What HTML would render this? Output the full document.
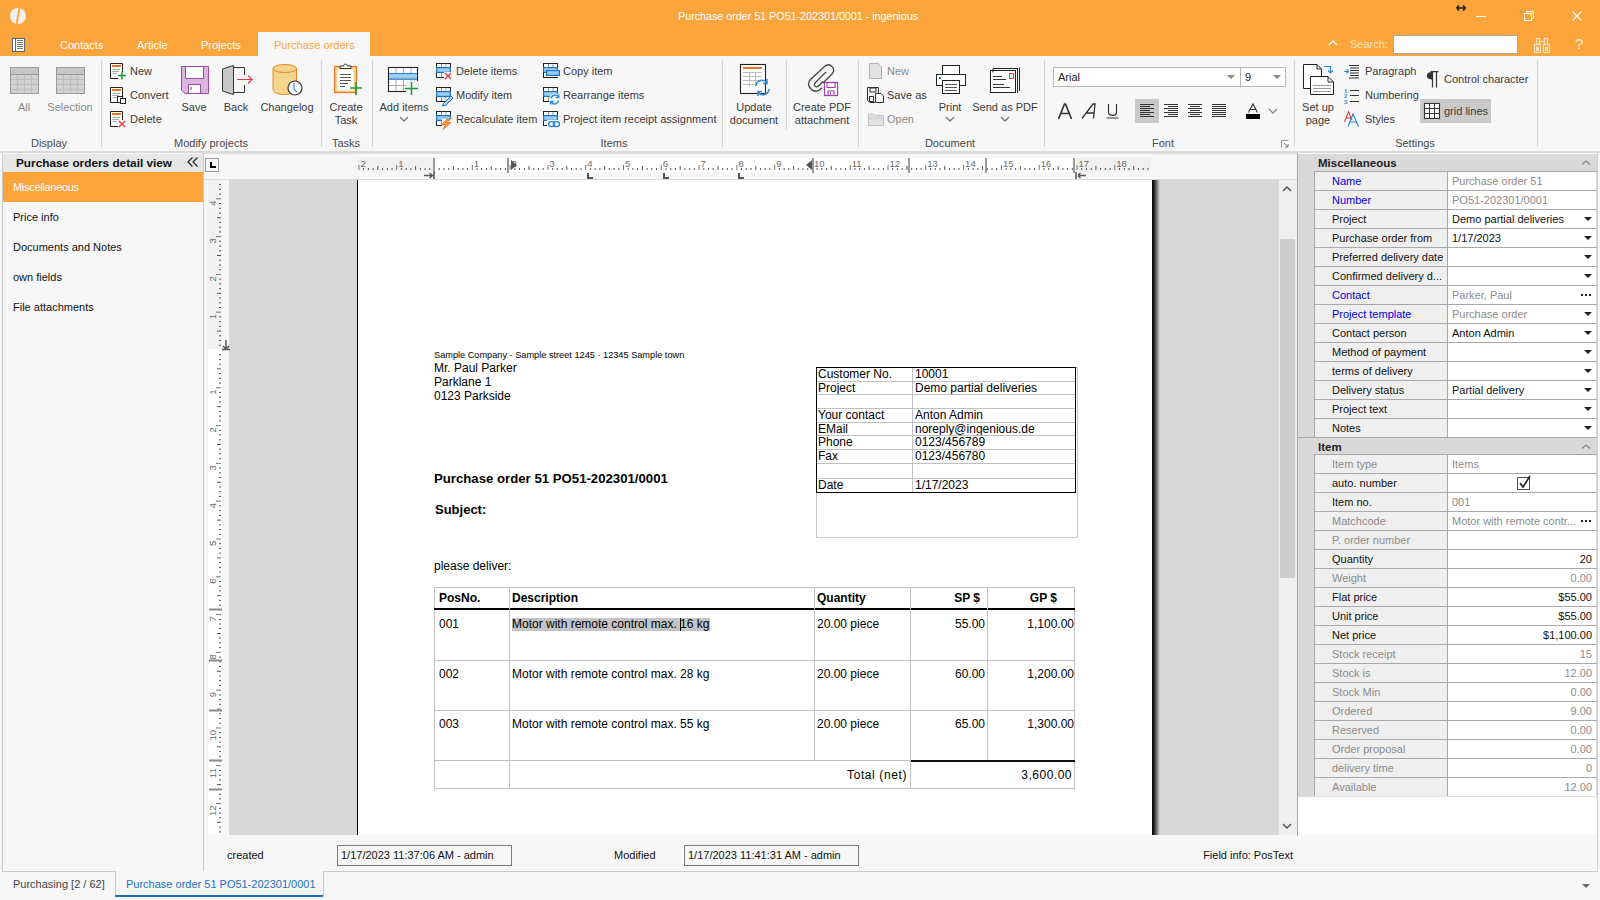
<!DOCTYPE html><html><head><meta charset="utf-8"><style>
*{margin:0;padding:0;box-sizing:border-box}
html,body{width:1600px;height:900px;overflow:hidden;background:#F7F7F7;font-family:"Liberation Sans",sans-serif;}
.t{position:absolute;white-space:nowrap;font-size:11px;line-height:14px;color:#222;}
.d{position:absolute;white-space:nowrap;font-family:"Liberation Sans",sans-serif;font-size:12px;line-height:14px;color:#000;}
svg{position:absolute;overflow:visible}
</style></head><body>
<div style="position:absolute;left:0px;top:0px;width:1600px;height:56px;background:#FAA43C"></div>
<svg style="position:absolute;left:10px;top:8px;" width="16" height="16" viewBox="0 0 16 16"><circle cx="8" cy="8" r="8" fill="#f2f2f2"/><path d="M8.5 -1 L10.5 -1 L7.5 17 L5.5 17 Z" fill="#FAA43C"/></svg>
<div class="t" style="left:598px;top:9px;width:400px;text-align:center;color:#fff;font-size:11px;letter-spacing:-0.14px">Purchase order 51 PO51-202301/0001 - ingenious</div>
<svg style="position:absolute;left:1455px;top:4px;" width="12" height="8" viewBox="0 0 12 8"><path d="M1.5 4 H10.5 M1.5 4 L4 1.5 M1.5 4 L4 6.5 M10.5 4 L8 1.5 M10.5 4 L8 6.5" stroke="#222" stroke-width="1.7" fill="none"/></svg>
<div style="position:absolute;left:1476px;top:16px;width:10px;height:1px;background:#fff"></div>
<svg style="position:absolute;left:1524px;top:11px;" width="11" height="11" viewBox="0 0 11 11"><rect x="0.5" y="2.5" width="7" height="7" fill="none" stroke="#fff"/><path d="M2.5 2.5 V0.5 H9.5 V7.5 H7.5" fill="none" stroke="#fff"/></svg>
<svg style="position:absolute;left:1572px;top:11px;" width="10" height="10" viewBox="0 0 10 10"><path d="M0.5 0.5 L9.5 9.5 M9.5 0.5 L0.5 9.5" stroke="#fff" stroke-width="1.1"/></svg>
<svg style="position:absolute;left:12px;top:38px;" width="22" height="14" viewBox="0 0 22 14"><rect x="0.5" y="0.5" width="12" height="13" fill="#fff" stroke="#666" stroke-width="1.1"/><path d="M3.5 1V13" stroke="#666" stroke-width="1.1"/><path d="M5 2.5H11M5 4.5H11M5 6.5H11M5 8.5H11M5 10.5H11" stroke="#666" stroke-width="0.9"/><path d="M14.5 6 L19 6 L16.75 8.5 Z" fill="#aab"/></svg>
<div class="t" style="left:60px;top:38px;color:#fff">Contacts</div>
<div class="t" style="left:137px;top:38px;color:#fff">Article</div>
<div class="t" style="left:201px;top:38px;color:#fff">Projects</div>
<div style="position:absolute;left:258px;top:32px;width:112px;height:24px;background:#F7F7F7"></div>
<div class="t" style="left:274px;top:38px;color:#FAA43C">Purchase orders</div>
<svg style="position:absolute;left:1328px;top:40px;" width="10" height="6" viewBox="0 0 10 6"><path d="M1 5 L5 1 L9 5" stroke="#fff" stroke-width="1.3" fill="none"/></svg>
<div class="t" style="left:1350px;top:37px;color:#fde3c0">Search:</div>
<div style="position:absolute;left:1393px;top:35px;width:125px;height:19px;background:#fff;border:1px solid #a8a8a8"></div>
<svg style="position:absolute;left:1533px;top:36px;" width="18" height="17" viewBox="0 0 18 17"><g fill="none" stroke="#fde3c0" stroke-width="1.2"><rect x="1.5" y="8.5" width="6" height="8"/><rect x="10.5" y="8.5" width="6" height="8"/><rect x="3.5" y="2.5" width="3" height="6"/><rect x="11.5" y="2.5" width="3" height="6"/><path d="M6.5 5.5H11.5"/><rect x="3.5" y="11.5" width="2" height="3"/><rect x="12.5" y="11.5" width="2" height="3"/></g></svg>
<div class="t" style="left:1575px;top:35px;color:#fff2e0;font-size:15px;line-height:18px">?</div>
<div style="position:absolute;left:0px;top:56px;width:1600px;height:95px;background:#F7F7F7"></div>
<div style="position:absolute;left:0px;top:151px;width:1600px;height:2px;background:#dadada"></div>
<svg style="position:absolute;left:10px;top:67px;" width="29" height="27" viewBox="0 0 29 27"><rect x="0.5" y="0.5" width="28" height="26" fill="#d2d2d2" stroke="#9a9a9a"/><rect x="1" y="1" width="27" height="6" fill="#c6c6c6"/><path d="M1 7.5H28" stroke="#9a9a9a"/><path d="M1 12.5H28" stroke="#bdbdbd"/><path d="M1 17.5H28" stroke="#bdbdbd"/><path d="M1 22.5H28" stroke="#bdbdbd"/><path d="M7.5 8V26" stroke="#bdbdbd"/><path d="M14.5 8V26" stroke="#bdbdbd"/><path d="M21.5 8V26" stroke="#bdbdbd"/></svg>
<svg style="position:absolute;left:56px;top:67px;" width="29" height="27" viewBox="0 0 29 27"><rect x="0.5" y="0.5" width="28" height="26" fill="#d2d2d2" stroke="#9a9a9a"/><rect x="1" y="1" width="27" height="6" fill="#c6c6c6"/><path d="M1 7.5H28" stroke="#9a9a9a"/><path d="M1 12.5H28" stroke="#bdbdbd"/><path d="M1 17.5H28" stroke="#bdbdbd"/><path d="M1 22.5H28" stroke="#bdbdbd"/><path d="M7.5 8V26" stroke="#bdbdbd"/><path d="M14.5 8V26" stroke="#bdbdbd"/><path d="M21.5 8V26" stroke="#bdbdbd"/></svg>
<div class="t" style="left:-176px;top:100px;width:400px;text-align:center;color:#8a8a8a">All</div>
<div class="t" style="left:-130px;top:100px;width:400px;text-align:center;color:#8a8a8a">Selection</div>
<div class="t" style="left:-151px;top:136px;width:400px;text-align:center;color:#4a4a4a">Display</div>
<div style="position:absolute;left:101px;top:60px;width:1px;height:87px;background:#d4d4d4"></div>
<svg style="position:absolute;left:110px;top:63px;" width="17" height="17" viewBox="0 0 17 17"><path d="M12.5 9 V0.5 H0.5 V15.5 H8" fill="#fff" stroke="#222"/><rect x="2" y="2" width="9" height="2" fill="#e8761e"/><path d="M2.5 6.5H10M2.5 8.5H9M2.5 10.5H7" stroke="#aaa"/><path d="M8 12.5H16M12 8.5V16.5" stroke="#1a9a3a" stroke-width="1.5"/></svg>
<svg style="position:absolute;left:110px;top:87px;" width="17" height="17" viewBox="0 0 17 17"><path d="M12.5 9 V0.5 H0.5 V15.5 H8" fill="#fff" stroke="#222"/><rect x="2" y="2" width="9" height="2" fill="#e8761e"/><path d="M2.5 6.5H10M2.5 8.5H9M2.5 10.5H7" stroke="#aaa"/><rect x="7.5" y="9.5" width="5" height="6" fill="#fff" stroke="#222"/><rect x="10.5" y="11.5" width="5" height="5" fill="#fff" stroke="#222"/></svg>
<svg style="position:absolute;left:110px;top:111px;" width="17" height="17" viewBox="0 0 17 17"><path d="M12.5 9 V0.5 H0.5 V15.5 H8" fill="#fff" stroke="#222"/><rect x="2" y="2" width="9" height="2" fill="#e8761e"/><path d="M2.5 6.5H10M2.5 8.5H9M2.5 10.5H7" stroke="#aaa"/><path d="M9 10 L15 16 M15 10 L9 16" stroke="#e03a3a" stroke-width="1.3"/></svg>
<div class="t" style="left:130px;top:64px;color:#3a3a3a">New</div>
<div class="t" style="left:130px;top:88px;color:#3a3a3a">Convert</div>
<div class="t" style="left:130px;top:112px;color:#3a3a3a">Delete</div>
<svg style="position:absolute;left:181px;top:66px;" width="28" height="28" viewBox="0 0 28 28"><path d="M0.5 0.5 H27.5 V27.5 H4 L0.5 24 Z" fill="#dcb6dc" stroke="#9c4aa8"/><rect x="4.5" y="0.5" width="18" height="12" fill="#fff" stroke="#9c4aa8"/><rect x="7.5" y="18.5" width="12" height="9" fill="#fff" stroke="#9c4aa8"/><path d="M10 21V24" stroke="#555"/></svg>
<div class="t" style="left:-6px;top:100px;width:400px;text-align:center;color:#3a3a3a">Save</div>
<svg style="position:absolute;left:222px;top:65px;" width="32" height="30" viewBox="0 0 32 30"><path d="M0.5 4 L11.5 0.5 V29.5 L0.5 26 Z" fill="#c8c8c8" stroke="#333"/><path d="M12 2.5 H22.5 V10 M22.5 20 V27.5 H12" fill="none" stroke="#333"/><path d="M15 14.5 H30 M26 10.5 L30 14.5 L26 18.5" fill="none" stroke="#e8383c" stroke-width="1.2"/></svg>
<div class="t" style="left:36px;top:100px;width:400px;text-align:center;color:#3a3a3a">Back</div>
<svg style="position:absolute;left:272px;top:64px;" width="32" height="32" viewBox="0 0 32 32"><path d="M1 4.5 V25 C1 28.5 6 30.5 12.5 30.5 C19 30.5 24.5 28.5 24.5 25 V4.5" fill="#f5d48c" stroke="#e8862a"/><ellipse cx="12.75" cy="4.5" rx="11.75" ry="4" fill="#f5d48c" stroke="#e8862a"/><circle cx="23" cy="24" r="7" fill="#fff" stroke="#333" stroke-width="1.2"/><path d="M22 19 V25 L25 28" fill="none" stroke="#2a88d8" stroke-width="1.1"/></svg>
<div class="t" style="left:87px;top:100px;width:400px;text-align:center;color:#3a3a3a">Changelog</div>
<div class="t" style="left:11px;top:136px;width:400px;text-align:center;color:#4a4a4a">Modify projects</div>
<div style="position:absolute;left:321px;top:60px;width:1px;height:87px;background:#d4d4d4"></div>
<svg style="position:absolute;left:333px;top:63px;" width="34" height="34" viewBox="0 0 34 34"><rect x="1.5" y="3.5" width="22" height="26" fill="#f5d48c" stroke="#e8762a" stroke-width="1.2"/><rect x="4.5" y="6.5" width="16" height="21" fill="#fff"/><path d="M7 5.5 H18 V3 H14.5 C14.5 0.5 10.5 0.5 10.5 3 H7 Z" fill="#fff" stroke="#333"/><path d="M7 11.5H18M7 14.5H18M7 17.5H18M7 20.5H15M7 23.5H12" stroke="#555"/><path d="M17 25 H29 M23 19 V32" stroke="#1a9a3a" stroke-width="1.6"/></svg>
<div class="t" style="left:146px;top:100px;width:400px;text-align:center;color:#3a3a3a">Create</div>
<div class="t" style="left:146px;top:113px;width:400px;text-align:center;color:#3a3a3a">Task</div>
<div class="t" style="left:146px;top:136px;width:400px;text-align:center;color:#4a4a4a">Tasks</div>
<div style="position:absolute;left:372px;top:60px;width:1px;height:87px;background:#d4d4d4"></div>
<svg style="position:absolute;left:388px;top:67px;" width="32" height="30" viewBox="0 0 32 30"><rect x="0.5" y="0.5" width="29" height="24" fill="#fff" stroke="#222" stroke-width="1.1"/><path d="M8 1V24M15.5 1V24M23 1V24M1 12.5H29M1 18.5H29" stroke="#aaa"/><rect x="1" y="6" width="28" height="6" fill="#9ccdf2"/><path d="M1 6.5H29M1 12H29" stroke="#2a7fd0"/><rect x="18" y="14" width="12" height="14" fill="#F7F7F7"/><path d="M17 21.5H30M23.5 15V28" stroke="#1a9a3a" stroke-width="1.5"/></svg>
<div class="t" style="left:204px;top:100px;width:400px;text-align:center;color:#3a3a3a">Add items</div>
<svg style="position:absolute;left:399px;top:116px;" width="10" height="6" viewBox="0 0 10 6"><path d="M1 1 L5 5 L9 1" stroke="#777" stroke-width="1.3" fill="none"/></svg>
<svg style="position:absolute;left:436px;top:63px;" width="18" height="18" viewBox="0 0 18 18"><rect x="0.5" y="0.5" width="14" height="14" fill="#fff" stroke="#222"/><path d="M5.5 1V14M10 1V14" stroke="#999"/><rect x="0.6" y="4.6" width="13.8" height="4.8" fill="#9ccdf2" stroke="#1a73c8" stroke-width="1.2"/><rect x="8" y="9" width="9" height="9" fill="#F7F7F7"/><path d="M9 10 L15 16 M15 10 L9 16" stroke="#e03a3a" stroke-width="1.3"/></svg>
<svg style="position:absolute;left:436px;top:87px;" width="19" height="20" viewBox="0 0 19 20"><rect x="0.5" y="0.5" width="14" height="14" fill="#fff" stroke="#222"/><path d="M5.5 1V14M10 1V14" stroke="#999"/><rect x="0.6" y="4.6" width="13.8" height="4.8" fill="#9ccdf2" stroke="#1a73c8" stroke-width="1.2"/><path d="M5 20 L16 8 L19 11 L8 20 Z" fill="#F7F7F7"/><path d="M7.5 16.5 L15 9 L17 11 L9.5 18.5 L6.5 19 Z" fill="#9ccdf2" stroke="#1a73c8" stroke-width="1"/><path d="M9 16.5 L15.5 10" stroke="#fff" stroke-width="0.6" stroke-dasharray="1 1"/></svg>
<svg style="position:absolute;left:436px;top:111px;" width="19" height="20" viewBox="0 0 19 20"><rect x="0.5" y="0.5" width="14" height="14" fill="#fff" stroke="#222"/><path d="M5.5 1V14M10 1V14" stroke="#999"/><rect x="0.6" y="4.6" width="13.8" height="4.8" fill="#9ccdf2" stroke="#1a73c8" stroke-width="1.2"/><rect x="6" y="8" width="11" height="11" fill="#F7F7F7"/><path d="M11 8 L6 13.5 H9.5 L7 18.5 L15 11.5 H11 L14.5 8 Z" fill="#f5a04a" stroke="#e8762a" stroke-width="0.9"/></svg>
<div class="t" style="left:456px;top:64px;color:#3a3a3a">Delete items</div>
<div class="t" style="left:456px;top:88px;color:#3a3a3a">Modify item</div>
<div class="t" style="left:456px;top:112px;color:#3a3a3a">Recalculate item</div>
<svg style="position:absolute;left:543px;top:63px;" width="18" height="18" viewBox="0 0 18 18"><rect x="0.5" y="0.5" width="14" height="14" fill="#fff" stroke="#222"/><path d="M5.5 1V14M10 1V14" stroke="#999"/><rect x="0.6" y="4.6" width="13.8" height="4.8" fill="#9ccdf2" stroke="#1a73c8" stroke-width="1.2"/><rect x="3" y="7" width="15" height="7" fill="#F7F7F7"/><path d="M0.5 9 V14.5 H14.5" fill="none" stroke="#222"/><rect x="3.6" y="7.6" width="12.8" height="4.8" fill="#9ccdf2" stroke="#1a73c8" stroke-width="1.2"/></svg>
<svg style="position:absolute;left:543px;top:87px;" width="18" height="18" viewBox="0 0 18 18"><rect x="0.5" y="0.5" width="14" height="14" fill="#fff" stroke="#222"/><path d="M5.5 1V14M10 1V14" stroke="#999"/><rect x="0.6" y="4.6" width="13.8" height="4.8" fill="#9ccdf2" stroke="#1a73c8" stroke-width="1.2"/><circle cx="12" cy="12.5" r="6" fill="#F7F7F7"/><path d="M8 11.5 A4 4 0 0 1 15.2 9.8 M15.5 13.5 A4 4 0 0 1 8.3 15.2" fill="none" stroke="#2a88d8" stroke-width="1.5"/><path d="M15.8 7.5 V10.5 H12.8 M7.7 17.5 V14.5 H10.7" fill="none" stroke="#2a88d8" stroke-width="1.3"/></svg>
<svg style="position:absolute;left:543px;top:111px;" width="18" height="18" viewBox="0 0 18 18"><rect x="0.5" y="0.5" width="14" height="14" fill="#fff" stroke="#222"/><path d="M5.5 1V14M10 1V14" stroke="#999"/><rect x="0.6" y="4.6" width="13.8" height="4.8" fill="#9ccdf2" stroke="#1a73c8" stroke-width="1.2"/><rect x="4" y="9" width="14" height="9" fill="#F7F7F7"/><rect x="5.6" y="10.6" width="6" height="5" rx="2.5" fill="none" stroke="#2a88d8" stroke-width="1.4"/><rect x="10.4" y="10.6" width="6" height="5" rx="2.5" fill="none" stroke="#2a88d8" stroke-width="1.4"/></svg>
<div class="t" style="left:563px;top:64px;color:#3a3a3a">Copy item</div>
<div class="t" style="left:563px;top:88px;color:#3a3a3a">Rearrange items</div>
<div class="t" style="left:563px;top:112px;color:#3a3a3a">Project item receipt assignment</div>
<div class="t" style="left:414px;top:136px;width:400px;text-align:center;color:#4a4a4a">Items</div>
<div style="position:absolute;left:722px;top:60px;width:1px;height:87px;background:#d4d4d4"></div>
<svg style="position:absolute;left:740px;top:64px;" width="34" height="34" viewBox="0 0 34 34"><rect x="0.5" y="0.5" width="25" height="29" fill="#fff" stroke="#222" stroke-width="1.1"/><rect x="3" y="3" width="19" height="2" fill="#e8762a"/><path d="M3 8.5H22M3 12.5H22M3 16.5H22M3 20.5H15M9.5 8V22M15.5 8V22" stroke="#bbb"/><path d="M16 22 A6 6 0 0 1 27 19 M29 25 A6 6 0 0 1 18 28" fill="none" stroke="#2a88d8" stroke-width="1.5"/><path d="M27 15 V19.5 H23 M18 32 V27.5 H22" fill="none" stroke="#2a88d8" stroke-width="1.4"/></svg>
<div class="t" style="left:554px;top:100px;width:400px;text-align:center;color:#3a3a3a">Update</div>
<div class="t" style="left:554px;top:113px;width:400px;text-align:center;color:#3a3a3a">document</div>
<div style="position:absolute;left:786px;top:60px;width:1px;height:70px;background:#d4d4d4"></div>
<svg style="position:absolute;left:800px;top:58px;" width="40" height="40" viewBox="0 0 40 40"><path d="M22 30 Q16 36 11 31 Q6 26 11 21 L24.5 8.5 Q28.5 5 32 8.5 Q35.5 12 32 16 L23 25" fill="none" stroke="#444" stroke-width="1.3"/><path d="M26 14 L15 25 Q13.5 27 15.5 28.5 Q17 29.5 19 27.5 L23 23.5" fill="none" stroke="#444" stroke-width="1.3"/><rect x="24.5" y="24.5" width="13" height="13" fill="#fff" stroke="#a040a8" stroke-width="1.2"/><path d="M27 25V29.5H35V25M28 37.5V33H34V37.5" fill="none" stroke="#a040a8" stroke-width="1.1"/><rect x="30" y="34.5" width="1" height="2" fill="#a040a8"/></svg>
<div class="t" style="left:622px;top:100px;width:400px;text-align:center;color:#3a3a3a">Create PDF</div>
<div class="t" style="left:622px;top:113px;width:400px;text-align:center;color:#3a3a3a">attachment</div>
<div style="position:absolute;left:858px;top:60px;width:1px;height:87px;background:#d4d4d4"></div>
<svg style="position:absolute;left:869px;top:63px;" width="16" height="16" viewBox="0 0 16 16"><path d="M0.5 0.5 H9 L12.5 4 V15.5 H0.5 Z" fill="#e2e2e2" stroke="#b0b0b0"/></svg>
<svg style="position:absolute;left:867px;top:87px;" width="18" height="16" viewBox="0 0 18 16"><path d="M0.5 0.5 H11.5 V6 M0.5 0.5 V13.5 L3 15.5 H8" fill="none" stroke="#333"/><rect x="3" y="1" width="6" height="4" fill="none" stroke="#333"/><rect x="2.5" y="9.5" width="4" height="5" fill="none" stroke="#333"/><path d="M8.5 6.5 H14 L16.5 9 V15.5 H8.5 Z" fill="#fff" stroke="#333"/></svg>
<svg style="position:absolute;left:868px;top:111px;" width="16" height="16" viewBox="0 0 16 16"><path d="M0.5 3 H6 L7.5 4.5 H15.5 V14.5 H0.5 Z" fill="#e2e2e2" stroke="#c0c0c0"/><path d="M0.5 7 H15.5" stroke="#c8c8c8"/></svg>
<div class="t" style="left:887px;top:64px;color:#8a8a8a">New</div>
<div class="t" style="left:887px;top:88px;color:#3a3a3a">Save as</div>
<div class="t" style="left:887px;top:112px;color:#8a8a8a">Open</div>
<svg style="position:absolute;left:936px;top:65px;" width="32" height="32" viewBox="0 0 32 32"><rect x="6.5" y="0.5" width="17" height="9" fill="#fff" stroke="#222"/><rect x="0.5" y="9.5" width="29" height="11" fill="#fff" stroke="#222"/><rect x="3" y="12" width="2" height="2" fill="#2a7fd0"/><rect x="6.5" y="15.5" width="17" height="13" fill="#fff" stroke="#222"/><path d="M9 19.5H21M9 22.5H21M9 25.5H21" stroke="#555"/></svg>
<div class="t" style="left:750px;top:100px;width:400px;text-align:center;color:#3a3a3a">Print</div>
<svg style="position:absolute;left:945px;top:116px;" width="10" height="6" viewBox="0 0 10 6"><path d="M1 1 L5 5 L9 1" stroke="#777" stroke-width="1.3" fill="none"/></svg>
<svg style="position:absolute;left:990px;top:67px;" width="34" height="28" viewBox="0 0 34 28"><path d="M29.5 0.5V24 M27.5 1.5 V26" stroke="#222"/><rect x="0.5" y="3.5" width="25" height="22" fill="#fff" stroke="#222"/><path d="M3 5.5 V1.5 H28" fill="none" stroke="#222"/><rect x="19.5" y="6.5" width="4" height="5" fill="none" stroke="#e03a3a"/><path d="M3 9.5H12M3 12.5H16M3 17.5H14M3 20.5H20" stroke="#333"/></svg>
<div class="t" style="left:805px;top:100px;width:400px;text-align:center;color:#3a3a3a">Send as PDF</div>
<svg style="position:absolute;left:1000px;top:116px;" width="10" height="6" viewBox="0 0 10 6"><path d="M1 1 L5 5 L9 1" stroke="#777" stroke-width="1.3" fill="none"/></svg>
<div class="t" style="left:750px;top:136px;width:400px;text-align:center;color:#4a4a4a">Document</div>
<div style="position:absolute;left:1044px;top:60px;width:1px;height:87px;background:#d4d4d4"></div>
<div style="position:absolute;left:1053px;top:67px;width:188px;height:20px;background:#fff;border:1px solid #b8b8b8"></div>
<div class="t" style="left:1058px;top:70px;color:#222">Arial</div>
<svg style="position:absolute;left:1227px;top:75px;" width="8" height="4" viewBox="0 0 8 4"><path d="M0 0 H8 L4 4 Z" fill="#888"/></svg>
<div style="position:absolute;left:1240px;top:67px;width:46px;height:20px;background:#fff;border:1px solid #b8b8b8"></div>
<div class="t" style="left:1245px;top:70px;color:#222">9</div>
<svg style="position:absolute;left:1273px;top:75px;" width="8" height="4" viewBox="0 0 8 4"><path d="M0 0 H8 L4 4 Z" fill="#888"/></svg>
<svg style="position:absolute;left:1057px;top:103px;" width="16" height="17" viewBox="0 0 16 17"><path d="M1.5 16 L7.5 1 L8.5 1 L14.5 16 M4 10.5 H12" fill="none" stroke="#333" stroke-width="1.7"/></svg>
<svg style="position:absolute;left:1081px;top:103px;" width="17" height="16" viewBox="0 0 17 16"><path d="M1 15.5 L12 1 L14 1 L12.5 15.5 M5 10 H13" fill="none" stroke="#333" stroke-width="1.3"/></svg>
<svg style="position:absolute;left:1106px;top:103px;" width="14" height="16" viewBox="0 0 14 16"><path d="M2.5 1 V9 C2.5 13.5 10.5 13.5 10.5 9 V1" fill="none" stroke="#333" stroke-width="1.2"/><path d="M0.5 15 H12.5" stroke="#333"/></svg>
<div style="position:absolute;left:1135px;top:99px;width:24px;height:24px;background:#cacaca"></div>
<svg style="position:absolute;left:1140px;top:103px;" width="14" height="16" viewBox="0 0 14 16"><path d="M0 1.5H14" stroke="#333" stroke-width="1"/><path d="M0 3.5H10" stroke="#333" stroke-width="1"/><path d="M0 5.5H14" stroke="#333" stroke-width="1"/><path d="M0 7.5H10" stroke="#333" stroke-width="1"/><path d="M0 9.5H14" stroke="#333" stroke-width="1"/><path d="M0 11.5H10" stroke="#333" stroke-width="1"/><path d="M0 13.5H14" stroke="#333" stroke-width="1"/></svg>
<svg style="position:absolute;left:1164px;top:103px;" width="14" height="16" viewBox="0 0 14 16"><path d="M0 1.5H14" stroke="#333" stroke-width="1"/><path d="M4 3.5H14" stroke="#333" stroke-width="1"/><path d="M0 5.5H14" stroke="#333" stroke-width="1"/><path d="M4 7.5H14" stroke="#333" stroke-width="1"/><path d="M0 9.5H14" stroke="#333" stroke-width="1"/><path d="M4 11.5H14" stroke="#333" stroke-width="1"/><path d="M0 13.5H14" stroke="#333" stroke-width="1"/></svg>
<svg style="position:absolute;left:1188px;top:103px;" width="14" height="16" viewBox="0 0 14 16"><path d="M0 1.5H14" stroke="#333" stroke-width="1"/><path d="M2 3.5H12" stroke="#333" stroke-width="1"/><path d="M0 5.5H14" stroke="#333" stroke-width="1"/><path d="M2 7.5H12" stroke="#333" stroke-width="1"/><path d="M0 9.5H14" stroke="#333" stroke-width="1"/><path d="M2 11.5H12" stroke="#333" stroke-width="1"/><path d="M0 13.5H14" stroke="#333" stroke-width="1"/></svg>
<svg style="position:absolute;left:1212px;top:103px;" width="14" height="16" viewBox="0 0 14 16"><path d="M0 1.5H14" stroke="#333" stroke-width="1"/><path d="M0 3.5H14" stroke="#333" stroke-width="1"/><path d="M0 5.5H14" stroke="#333" stroke-width="1"/><path d="M0 7.5H14" stroke="#333" stroke-width="1"/><path d="M0 9.5H14" stroke="#333" stroke-width="1"/><path d="M0 11.5H14" stroke="#333" stroke-width="1"/><path d="M0 13.5H14" stroke="#333" stroke-width="1"/></svg>
<svg style="position:absolute;left:1246px;top:103px;" width="14" height="17" viewBox="0 0 14 17"><path d="M2.5 9.5 L7 1 L11.5 9.5 M4.5 6.5 H9.5" fill="none" stroke="#333" stroke-width="1.1"/><rect x="0" y="11" width="14" height="5" fill="#000"/></svg>
<svg style="position:absolute;left:1268px;top:108px;" width="10" height="6" viewBox="0 0 10 6"><path d="M1 1 L5 5 L9 1" stroke="#888" stroke-width="1.3" fill="none"/></svg>
<div class="t" style="left:963px;top:136px;width:400px;text-align:center;color:#4a4a4a">Font</div>
<svg style="position:absolute;left:1281px;top:140px;" width="8" height="8" viewBox="0 0 8 8"><path d="M0.5 7.5 V0.5 H7.5" fill="none" stroke="#999"/><path d="M3 3 L7 7 M4 7 H7 V4" fill="none" stroke="#777"/></svg>
<div style="position:absolute;left:1044px;top:60px;width:1px;height:87px;background:#d4d4d4"></div>
<div style="position:absolute;left:1294px;top:60px;width:1px;height:87px;background:#d4d4d4"></div>
<svg style="position:absolute;left:1303px;top:64px;" width="34" height="32" viewBox="0 0 34 32"><path d="M0.5 0.5 H14 L18.5 5 V24.5 H0.5 Z" fill="#fff" stroke="#222"/><path d="M14 0.5 V5 H18.5" fill="none" stroke="#222"/><path d="M7.5 12.5 H25 L30.5 18 V30.5 H7.5 Z" fill="#fff" stroke="#222"/><path d="M25 12.5 V18 H30.5" fill="none" stroke="#222"/><path d="M10 21.5H28M10 24.5H28M10 27.5H28" stroke="#999"/><path d="M21 2.5 H27.5 V9 M25 6.5 L27.5 9 L30 6.5" fill="none" stroke="#2a88d8" stroke-width="1.2"/></svg>
<div class="t" style="left:1118px;top:100px;width:400px;text-align:center;color:#3a3a3a">Set up</div>
<div class="t" style="left:1118px;top:113px;width:400px;text-align:center;color:#3a3a3a">page</div>
<svg style="position:absolute;left:1344px;top:64px;" width="16" height="15" viewBox="0 0 16 15"><path d="M5 1.5H15M6 4H15M6 6.5H15M6 9H15M6 11.5H15M5 14H15" stroke="#333" stroke-width="1"/><path d="M0 7.5 H4 M2.5 5.5 L4.5 7.5 L2.5 9.5" fill="none" stroke="#2a88d8" stroke-width="1.1"/></svg>
<svg style="position:absolute;left:1344px;top:87px;" width="16" height="17" viewBox="0 0 16 17"><text x="0" y="6" font-size="6" font-family="Liberation Sans" fill="#2a88d8" font-weight="bold">1</text><text x="0" y="11" font-size="6" font-family="Liberation Sans" fill="#2a88d8" font-weight="bold">2</text><text x="0" y="16.5" font-size="6" font-family="Liberation Sans" fill="#2a88d8" font-weight="bold">3</text><path d="M6 3.5H15M6 8.5H15M6 14.5H15" stroke="#333" stroke-width="1.1"/></svg>
<svg style="position:absolute;left:1344px;top:111px;" width="16" height="16" viewBox="0 0 16 16"><path d="M0.5 11 L4.5 1 L8 9 M2 7 H6.5" fill="none" stroke="#e03a3a" stroke-width="1.1"/><path d="M4 15.5 L9 3 L14.5 15.5 M6 11 H12.5" fill="none" stroke="#2a88d8" stroke-width="1.2"/></svg>
<div class="t" style="left:1365px;top:64px;color:#3a3a3a">Paragraph</div>
<div class="t" style="left:1365px;top:88px;color:#3a3a3a">Numbering</div>
<div class="t" style="left:1365px;top:112px;color:#3a3a3a">Styles</div>
<svg style="position:absolute;left:1425px;top:71px;" width="14" height="17" viewBox="0 0 14 17"><path d="M7 1 C0 1 0 8.5 7 8.5 Z" fill="#333"/><path d="M5.5 0.6 H13.5 M7.5 1 V16.5 M11.5 1 V16.5" fill="none" stroke="#333" stroke-width="1.2"/></svg>
<div class="t" style="left:1444px;top:72px;color:#3a3a3a">Control character</div>
<div style="position:absolute;left:1420px;top:99px;width:71px;height:24px;background:#cacaca"></div>
<svg style="position:absolute;left:1424px;top:103px;" width="16" height="16" viewBox="0 0 16 16"><rect x="0.5" y="0.5" width="15" height="15" fill="#fff" stroke="#333" stroke-width="1.1"/><path d="M5.5 1V15M10.5 1V15M1 5.5H15M1 10.5H15" stroke="#333"/></svg>
<div class="t" style="left:1444px;top:104px;color:#3a3a3a">grid lines</div>
<div class="t" style="left:1215px;top:136px;width:400px;text-align:center;color:#4a4a4a">Settings</div>
<div style="position:absolute;left:1537px;top:60px;width:1px;height:87px;background:#d4d4d4"></div>
<div style="position:absolute;left:2px;top:153px;width:1px;height:719px;background:#c8c8c8"></div>
<div style="position:absolute;left:2px;top:871px;width:114px;height:1px;background:#c8c8c8"></div>
<div style="position:absolute;left:203px;top:153px;width:1px;height:718px;background:#c8c8c8"></div>
<div style="position:absolute;left:3px;top:154px;width:200px;height:18px;background:#e6e6e6"></div>
<div class="t" style="left:16px;top:156px;font-weight:bold;color:#111;font-size:11.8px;line-height:14px">Purchase orders detail view</div>
<svg style="position:absolute;left:187px;top:157px;" width="12" height="10" viewBox="0 0 12 10"><path d="M5.5 0.5 L1 5 L5.5 9.5 M10.5 0.5 L6 5 L10.5 9.5" fill="none" stroke="#222" stroke-width="1.2"/></svg>
<div style="position:absolute;left:3px;top:172px;width:200px;height:30px;background:#FAA43C"></div>
<div class="t" style="left:13px;top:180px;color:#fff;letter-spacing:-0.3px">Miscellaneous</div>
<div class="t" style="left:13px;top:210px;color:#111">Price info</div>
<div class="t" style="left:13px;top:240px;color:#111">Documents and Notes</div>
<div class="t" style="left:13px;top:270px;color:#111">own fields</div>
<div class="t" style="left:13px;top:300px;color:#111">File attachments</div>
<div class="t" style="left:13px;top:877px;color:#444">Purchasing [2 / 62]</div>
<div style="position:absolute;left:115px;top:871px;width:1px;height:25px;background:#c8c8c8"></div>
<div style="position:absolute;left:323px;top:871px;width:1275px;height:1px;background:#c8c8c8"></div>
<div style="position:absolute;left:323px;top:871px;width:1px;height:25px;background:#c8c8c8"></div>
<div style="position:absolute;left:115px;top:895px;width:208px;height:2px;background:#1a6fc4"></div>
<div class="t" style="left:126px;top:877px;color:#1a70c8">Purchase order 51 PO51-202301/0001</div>
<svg style="position:absolute;left:1582px;top:884px;" width="8" height="4" viewBox="0 0 8 4"><path d="M0 0 H8 L4 4 Z" fill="#666"/></svg>
<div style="position:absolute;left:1597px;top:153px;width:1px;height:719px;background:#d0d0d0"></div>
<div class="t" style="left:227px;top:848px;color:#111">created</div>
<div style="position:absolute;left:337px;top:845px;width:175px;height:21px;border:1px solid #7a7a7a;background:#f7f7f7"></div>
<div class="t" style="left:341px;top:848px;color:#111">1/17/2023 11:37:06 AM - admin</div>
<div class="t" style="left:614px;top:848px;color:#111">Modified</div>
<div style="position:absolute;left:684px;top:845px;width:175px;height:21px;border:1px solid #7a7a7a;background:#f7f7f7"></div>
<div class="t" style="left:688px;top:848px;color:#111">1/17/2023 11:41:31 AM - admin</div>
<div class="t" style="left:893px;top:848px;width:400px;text-align:right;color:#111">Field info: PosText</div>
<div style="position:absolute;left:204px;top:153px;width:1094px;height:1px;background:#e0e0e0"></div>
<div style="position:absolute;left:1297px;top:153px;width:1px;height:683px;background:#a8a8a8"></div>
<div style="position:absolute;left:205px;top:158px;width:14px;height:14px;border:1px solid #9a9a9a;background:#f7f7f7"></div>
<svg style="position:absolute;left:210px;top:162px;" width="7" height="6" viewBox="0 0 7 6"><path d="M1 0 V5 H6" fill="none" stroke="#000" stroke-width="2"/></svg>
<div style="position:absolute;left:229px;top:180px;width:1050px;height:655px;background:#d8d8d8"></div>
<div style="position:absolute;left:204px;top:179px;width:1093px;height:1px;background:#dcdcdc"></div>
<div style="position:absolute;left:357px;top:180px;width:795px;height:655px;background:#fff;border-left:1px solid #000"></div>
<div style="position:absolute;left:1152px;top:180px;width:8px;height:655px;background:linear-gradient(to right,#000 0%,#222 25%,#777 60%,#d8d8d8 100%)"></div>
<div style="position:absolute;left:1279px;top:180px;width:18px;height:655px;background:#efefef"></div>
<div style="position:absolute;left:1280px;top:239px;width:15px;height:339px;background:#cdcdcd"></div>
<svg style="position:absolute;left:1282px;top:186px;" width="10" height="6" viewBox="0 0 10 6"><path d="M1 5 L5 1 L9 5" stroke="#555" stroke-width="1.5" fill="none"/></svg>
<svg style="position:absolute;left:1282px;top:823px;" width="10" height="6" viewBox="0 0 10 6"><path d="M1 1 L5 5 L9 1" stroke="#555" stroke-width="1.5" fill="none"/></svg>
<svg style="position:absolute;left:358px;top:158px;" width="793" height="14" viewBox="0 0 793 14"><rect x="0" y="0" width="76" height="14" fill="#f0f0f0"/><rect x="76" y="0" width="642" height="14" fill="#fff"/><rect x="718" y="0" width="75" height="14" fill="#f0f0f0"/><path d="M0.9 7 V12" stroke="#777" stroke-width="1"/><text x="2.4" y="9" font-size="9.5" font-family="Liberation Sans" fill="#6a6a6a">2</text><path d="M5.6 10 V12" stroke="#555" stroke-width="1"/><path d="M10.4 10 V12" stroke="#555" stroke-width="1"/><path d="M15.1 10 V12" stroke="#555" stroke-width="1"/><path d="M19.8 8 V12" stroke="#555" stroke-width="1"/><path d="M24.5 10 V12" stroke="#555" stroke-width="1"/><path d="M29.3 10 V12" stroke="#555" stroke-width="1"/><path d="M34.0 10 V12" stroke="#555" stroke-width="1"/><path d="M38.7 7 V12" stroke="#777" stroke-width="1"/><text x="40.2" y="9" font-size="9.5" font-family="Liberation Sans" fill="#6a6a6a">1</text><path d="M43.4 10 V12" stroke="#555" stroke-width="1"/><path d="M48.2 10 V12" stroke="#555" stroke-width="1"/><path d="M52.9 10 V12" stroke="#555" stroke-width="1"/><path d="M57.6 8 V12" stroke="#555" stroke-width="1"/><path d="M62.3 10 V12" stroke="#555" stroke-width="1"/><path d="M67.1 10 V12" stroke="#555" stroke-width="1"/><path d="M71.8 10 V12" stroke="#555" stroke-width="1"/><path d="M81.2 10 V12" stroke="#555" stroke-width="1"/><path d="M85.9 10 V12" stroke="#555" stroke-width="1"/><path d="M90.7 10 V12" stroke="#555" stroke-width="1"/><path d="M95.4 8 V12" stroke="#555" stroke-width="1"/><path d="M100.1 10 V12" stroke="#555" stroke-width="1"/><path d="M104.8 10 V12" stroke="#555" stroke-width="1"/><path d="M109.6 10 V12" stroke="#555" stroke-width="1"/><path d="M114.3 7 V12" stroke="#777" stroke-width="1"/><text x="115.8" y="9" font-size="9.5" font-family="Liberation Sans" fill="#6a6a6a">1</text><path d="M119.0 10 V12" stroke="#555" stroke-width="1"/><path d="M123.7 10 V12" stroke="#555" stroke-width="1"/><path d="M128.5 10 V12" stroke="#555" stroke-width="1"/><path d="M133.2 8 V12" stroke="#555" stroke-width="1"/><path d="M137.9 10 V12" stroke="#555" stroke-width="1"/><path d="M142.6 10 V12" stroke="#555" stroke-width="1"/><path d="M147.4 10 V12" stroke="#555" stroke-width="1"/><path d="M152.1 7 V12" stroke="#777" stroke-width="1"/><text x="153.6" y="9" font-size="9.5" font-family="Liberation Sans" fill="#6a6a6a">2</text><path d="M156.8 10 V12" stroke="#555" stroke-width="1"/><path d="M161.5 10 V12" stroke="#555" stroke-width="1"/><path d="M166.3 10 V12" stroke="#555" stroke-width="1"/><path d="M171.0 8 V12" stroke="#555" stroke-width="1"/><path d="M175.7 10 V12" stroke="#555" stroke-width="1"/><path d="M180.4 10 V12" stroke="#555" stroke-width="1"/><path d="M185.2 10 V12" stroke="#555" stroke-width="1"/><path d="M189.9 7 V12" stroke="#777" stroke-width="1"/><text x="191.4" y="9" font-size="9.5" font-family="Liberation Sans" fill="#6a6a6a">3</text><path d="M194.6 10 V12" stroke="#555" stroke-width="1"/><path d="M199.3 10 V12" stroke="#555" stroke-width="1"/><path d="M204.1 10 V12" stroke="#555" stroke-width="1"/><path d="M208.8 8 V12" stroke="#555" stroke-width="1"/><path d="M213.5 10 V12" stroke="#555" stroke-width="1"/><path d="M218.2 10 V12" stroke="#555" stroke-width="1"/><path d="M223.0 10 V12" stroke="#555" stroke-width="1"/><path d="M227.7 7 V12" stroke="#777" stroke-width="1"/><text x="229.2" y="9" font-size="9.5" font-family="Liberation Sans" fill="#6a6a6a">4</text><path d="M232.4 10 V12" stroke="#555" stroke-width="1"/><path d="M237.1 10 V12" stroke="#555" stroke-width="1"/><path d="M241.9 10 V12" stroke="#555" stroke-width="1"/><path d="M246.6 8 V12" stroke="#555" stroke-width="1"/><path d="M251.3 10 V12" stroke="#555" stroke-width="1"/><path d="M256.0 10 V12" stroke="#555" stroke-width="1"/><path d="M260.8 10 V12" stroke="#555" stroke-width="1"/><path d="M265.5 7 V12" stroke="#777" stroke-width="1"/><text x="267.0" y="9" font-size="9.5" font-family="Liberation Sans" fill="#6a6a6a">5</text><path d="M270.2 10 V12" stroke="#555" stroke-width="1"/><path d="M274.9 10 V12" stroke="#555" stroke-width="1"/><path d="M279.6 10 V12" stroke="#555" stroke-width="1"/><path d="M284.4 8 V12" stroke="#555" stroke-width="1"/><path d="M289.1 10 V12" stroke="#555" stroke-width="1"/><path d="M293.8 10 V12" stroke="#555" stroke-width="1"/><path d="M298.5 10 V12" stroke="#555" stroke-width="1"/><path d="M303.3 7 V12" stroke="#777" stroke-width="1"/><text x="304.8" y="9" font-size="9.5" font-family="Liberation Sans" fill="#6a6a6a">6</text><path d="M308.0 10 V12" stroke="#555" stroke-width="1"/><path d="M312.7 10 V12" stroke="#555" stroke-width="1"/><path d="M317.4 10 V12" stroke="#555" stroke-width="1"/><path d="M322.2 8 V12" stroke="#555" stroke-width="1"/><path d="M326.9 10 V12" stroke="#555" stroke-width="1"/><path d="M331.6 10 V12" stroke="#555" stroke-width="1"/><path d="M336.3 10 V12" stroke="#555" stroke-width="1"/><path d="M341.1 7 V12" stroke="#777" stroke-width="1"/><text x="342.6" y="9" font-size="9.5" font-family="Liberation Sans" fill="#6a6a6a">7</text><path d="M345.8 10 V12" stroke="#555" stroke-width="1"/><path d="M350.5 10 V12" stroke="#555" stroke-width="1"/><path d="M355.2 10 V12" stroke="#555" stroke-width="1"/><path d="M360.0 8 V12" stroke="#555" stroke-width="1"/><path d="M364.7 10 V12" stroke="#555" stroke-width="1"/><path d="M369.4 10 V12" stroke="#555" stroke-width="1"/><path d="M374.1 10 V12" stroke="#555" stroke-width="1"/><path d="M378.9 7 V12" stroke="#777" stroke-width="1"/><text x="380.4" y="9" font-size="9.5" font-family="Liberation Sans" fill="#6a6a6a">8</text><path d="M383.6 10 V12" stroke="#555" stroke-width="1"/><path d="M388.3 10 V12" stroke="#555" stroke-width="1"/><path d="M393.0 10 V12" stroke="#555" stroke-width="1"/><path d="M397.8 8 V12" stroke="#555" stroke-width="1"/><path d="M402.5 10 V12" stroke="#555" stroke-width="1"/><path d="M407.2 10 V12" stroke="#555" stroke-width="1"/><path d="M411.9 10 V12" stroke="#555" stroke-width="1"/><path d="M416.7 7 V12" stroke="#777" stroke-width="1"/><text x="418.2" y="9" font-size="9.5" font-family="Liberation Sans" fill="#6a6a6a">9</text><path d="M421.4 10 V12" stroke="#555" stroke-width="1"/><path d="M426.1 10 V12" stroke="#555" stroke-width="1"/><path d="M430.8 10 V12" stroke="#555" stroke-width="1"/><path d="M435.6 8 V12" stroke="#555" stroke-width="1"/><path d="M440.3 10 V12" stroke="#555" stroke-width="1"/><path d="M445.0 10 V12" stroke="#555" stroke-width="1"/><path d="M449.7 10 V12" stroke="#555" stroke-width="1"/><path d="M454.5 7 V12" stroke="#777" stroke-width="1"/><text x="456.0" y="9" font-size="9.5" font-family="Liberation Sans" fill="#6a6a6a">10</text><path d="M459.2 10 V12" stroke="#555" stroke-width="1"/><path d="M463.9 10 V12" stroke="#555" stroke-width="1"/><path d="M468.6 10 V12" stroke="#555" stroke-width="1"/><path d="M473.3 8 V12" stroke="#555" stroke-width="1"/><path d="M478.1 10 V12" stroke="#555" stroke-width="1"/><path d="M482.8 10 V12" stroke="#555" stroke-width="1"/><path d="M487.5 10 V12" stroke="#555" stroke-width="1"/><path d="M492.2 7 V12" stroke="#777" stroke-width="1"/><text x="493.7" y="9" font-size="9.5" font-family="Liberation Sans" fill="#6a6a6a">11</text><path d="M497.0 10 V12" stroke="#555" stroke-width="1"/><path d="M501.7 10 V12" stroke="#555" stroke-width="1"/><path d="M506.4 10 V12" stroke="#555" stroke-width="1"/><path d="M511.1 8 V12" stroke="#555" stroke-width="1"/><path d="M515.9 10 V12" stroke="#555" stroke-width="1"/><path d="M520.6 10 V12" stroke="#555" stroke-width="1"/><path d="M525.3 10 V12" stroke="#555" stroke-width="1"/><path d="M530.0 7 V12" stroke="#777" stroke-width="1"/><text x="531.5" y="9" font-size="9.5" font-family="Liberation Sans" fill="#6a6a6a">12</text><path d="M534.8 10 V12" stroke="#555" stroke-width="1"/><path d="M539.5 10 V12" stroke="#555" stroke-width="1"/><path d="M544.2 10 V12" stroke="#555" stroke-width="1"/><path d="M548.9 8 V12" stroke="#555" stroke-width="1"/><path d="M553.7 10 V12" stroke="#555" stroke-width="1"/><path d="M558.4 10 V12" stroke="#555" stroke-width="1"/><path d="M563.1 10 V12" stroke="#555" stroke-width="1"/><path d="M567.8 7 V12" stroke="#777" stroke-width="1"/><text x="569.3" y="9" font-size="9.5" font-family="Liberation Sans" fill="#6a6a6a">13</text><path d="M572.6 10 V12" stroke="#555" stroke-width="1"/><path d="M577.3 10 V12" stroke="#555" stroke-width="1"/><path d="M582.0 10 V12" stroke="#555" stroke-width="1"/><path d="M586.7 8 V12" stroke="#555" stroke-width="1"/><path d="M591.5 10 V12" stroke="#555" stroke-width="1"/><path d="M596.2 10 V12" stroke="#555" stroke-width="1"/><path d="M600.9 10 V12" stroke="#555" stroke-width="1"/><path d="M605.6 7 V12" stroke="#777" stroke-width="1"/><text x="607.1" y="9" font-size="9.5" font-family="Liberation Sans" fill="#6a6a6a">14</text><path d="M610.4 10 V12" stroke="#555" stroke-width="1"/><path d="M615.1 10 V12" stroke="#555" stroke-width="1"/><path d="M619.8 10 V12" stroke="#555" stroke-width="1"/><path d="M624.5 8 V12" stroke="#555" stroke-width="1"/><path d="M629.3 10 V12" stroke="#555" stroke-width="1"/><path d="M634.0 10 V12" stroke="#555" stroke-width="1"/><path d="M638.7 10 V12" stroke="#555" stroke-width="1"/><path d="M643.4 7 V12" stroke="#777" stroke-width="1"/><text x="644.9" y="9" font-size="9.5" font-family="Liberation Sans" fill="#6a6a6a">15</text><path d="M648.1 10 V12" stroke="#555" stroke-width="1"/><path d="M652.9 10 V12" stroke="#555" stroke-width="1"/><path d="M657.6 10 V12" stroke="#555" stroke-width="1"/><path d="M662.3 8 V12" stroke="#555" stroke-width="1"/><path d="M667.0 10 V12" stroke="#555" stroke-width="1"/><path d="M671.8 10 V12" stroke="#555" stroke-width="1"/><path d="M676.5 10 V12" stroke="#555" stroke-width="1"/><path d="M681.2 7 V12" stroke="#777" stroke-width="1"/><text x="682.7" y="9" font-size="9.5" font-family="Liberation Sans" fill="#6a6a6a">16</text><path d="M685.9 10 V12" stroke="#555" stroke-width="1"/><path d="M690.7 10 V12" stroke="#555" stroke-width="1"/><path d="M695.4 10 V12" stroke="#555" stroke-width="1"/><path d="M700.1 8 V12" stroke="#555" stroke-width="1"/><path d="M704.8 10 V12" stroke="#555" stroke-width="1"/><path d="M709.6 10 V12" stroke="#555" stroke-width="1"/><path d="M714.3 10 V12" stroke="#555" stroke-width="1"/><path d="M719.0 7 V12" stroke="#777" stroke-width="1"/><text x="720.5" y="9" font-size="9.5" font-family="Liberation Sans" fill="#6a6a6a">17</text><path d="M723.7 10 V12" stroke="#555" stroke-width="1"/><path d="M728.5 10 V12" stroke="#555" stroke-width="1"/><path d="M733.2 10 V12" stroke="#555" stroke-width="1"/><path d="M737.9 8 V12" stroke="#555" stroke-width="1"/><path d="M742.6 10 V12" stroke="#555" stroke-width="1"/><path d="M747.4 10 V12" stroke="#555" stroke-width="1"/><path d="M752.1 10 V12" stroke="#555" stroke-width="1"/><path d="M756.8 7 V12" stroke="#777" stroke-width="1"/><text x="758.3" y="9" font-size="9.5" font-family="Liberation Sans" fill="#6a6a6a">18</text><path d="M761.5 10 V12" stroke="#555" stroke-width="1"/><path d="M766.3 10 V12" stroke="#555" stroke-width="1"/><path d="M771.0 10 V12" stroke="#555" stroke-width="1"/><path d="M775.7 8 V12" stroke="#555" stroke-width="1"/><path d="M780.4 10 V12" stroke="#555" stroke-width="1"/><path d="M785.2 10 V12" stroke="#555" stroke-width="1"/><path d="M789.9 10 V12" stroke="#555" stroke-width="1"/></svg>
<div style="position:absolute;left:507px;top:158px;width:2px;height:15px;background:#9a9a9a"></div>
<div style="position:absolute;left:812px;top:158px;width:2px;height:15px;background:#9a9a9a"></div>
<div style="position:absolute;left:908px;top:158px;width:2px;height:15px;background:#9a9a9a"></div>
<div style="position:absolute;left:985px;top:158px;width:2px;height:15px;background:#9a9a9a"></div>
<div style="position:absolute;left:1073px;top:158px;width:2px;height:15px;background:#9a9a9a"></div>
<svg style="position:absolute;left:511px;top:160px;" width="6" height="10" viewBox="0 0 6 10"><path d="M0 0 L6 5 L0 10 Z" fill="#555"/></svg>
<svg style="position:absolute;left:806px;top:160px;" width="6" height="10" viewBox="0 0 6 10"><path d="M6 0 L0 5 L6 10 Z" fill="#555"/></svg>
<div style="position:absolute;left:433px;top:158px;width:2px;height:15px;background:#9a9a9a"></div>
<svg style="position:absolute;left:424px;top:172px;" width="11" height="7" viewBox="0 0 11 7"><path d="M0 3.5 H8 M5.5 1 L8.5 3.5 L5.5 6 M10 0 V7" fill="none" stroke="#555" stroke-width="1.5"/></svg>
<svg style="position:absolute;left:1075px;top:172px;" width="11" height="7" viewBox="0 0 11 7"><path d="M1 0 V7 M3 3.5 L5.5 1 M3 3.5 L5.5 6 M3 3.5 H11" fill="none" stroke="#555" stroke-width="1.5"/></svg>
<svg style="position:absolute;left:587px;top:173px;" width="6" height="6" viewBox="0 0 6 6"><path d="M1 0 V5 H6" fill="none" stroke="#555" stroke-width="2"/></svg>
<svg style="position:absolute;left:663px;top:173px;" width="6" height="6" viewBox="0 0 6 6"><path d="M1 0 V5 H6" fill="none" stroke="#555" stroke-width="2"/></svg>
<svg style="position:absolute;left:738px;top:173px;" width="6" height="6" viewBox="0 0 6 6"><path d="M1 0 V5 H6" fill="none" stroke="#555" stroke-width="2"/></svg>
<svg style="position:absolute;left:208px;top:180px;" width="14" height="655" viewBox="0 0 14 655"><rect x="0" y="0" width="14" height="169" fill="#f2f2f2"/><rect x="0" y="169" width="14" height="486" fill="#fff"/><path d="M11 4.6 H13" stroke="#555"/><path d="M11 9.4 H13" stroke="#555"/><path d="M11 14.1 H13" stroke="#555"/><path d="M8 18.8 H13" stroke="#777"/><text transform="translate(7.5,25.8) rotate(-90)" font-size="9.5" font-family="Liberation Sans" fill="#6a6a6a">4</text><path d="M11 23.5 H13" stroke="#555"/><path d="M11 28.3 H13" stroke="#555"/><path d="M11 33.0 H13" stroke="#555"/><path d="M9 37.7 H13" stroke="#555"/><path d="M11 42.4 H13" stroke="#555"/><path d="M11 47.2 H13" stroke="#555"/><path d="M11 51.9 H13" stroke="#555"/><path d="M8 56.6 H13" stroke="#777"/><text transform="translate(7.5,63.6) rotate(-90)" font-size="9.5" font-family="Liberation Sans" fill="#6a6a6a">3</text><path d="M11 61.3 H13" stroke="#555"/><path d="M11 66.1 H13" stroke="#555"/><path d="M11 70.8 H13" stroke="#555"/><path d="M9 75.5 H13" stroke="#555"/><path d="M11 80.2 H13" stroke="#555"/><path d="M11 85.0 H13" stroke="#555"/><path d="M11 89.7 H13" stroke="#555"/><path d="M8 94.4 H13" stroke="#777"/><text transform="translate(7.5,101.4) rotate(-90)" font-size="9.5" font-family="Liberation Sans" fill="#6a6a6a">2</text><path d="M11 99.1 H13" stroke="#555"/><path d="M11 103.9 H13" stroke="#555"/><path d="M11 108.6 H13" stroke="#555"/><path d="M9 113.3 H13" stroke="#555"/><path d="M11 118.0 H13" stroke="#555"/><path d="M11 122.8 H13" stroke="#555"/><path d="M11 127.5 H13" stroke="#555"/><path d="M8 132.2 H13" stroke="#777"/><text transform="translate(7.5,139.2) rotate(-90)" font-size="9.5" font-family="Liberation Sans" fill="#6a6a6a">1</text><path d="M11 136.9 H13" stroke="#555"/><path d="M11 141.7 H13" stroke="#555"/><path d="M11 146.4 H13" stroke="#555"/><path d="M9 151.1 H13" stroke="#555"/><path d="M11 155.8 H13" stroke="#555"/><path d="M11 160.6 H13" stroke="#555"/><path d="M11 165.3 H13" stroke="#555"/><path d="M11 174.7 H13" stroke="#555"/><path d="M11 179.4 H13" stroke="#555"/><path d="M11 184.2 H13" stroke="#555"/><path d="M9 188.9 H13" stroke="#555"/><path d="M11 193.6 H13" stroke="#555"/><path d="M11 198.3 H13" stroke="#555"/><path d="M11 203.1 H13" stroke="#555"/><path d="M8 207.8 H13" stroke="#777"/><text transform="translate(7.5,214.8) rotate(-90)" font-size="9.5" font-family="Liberation Sans" fill="#6a6a6a">1</text><path d="M11 212.5 H13" stroke="#555"/><path d="M11 217.2 H13" stroke="#555"/><path d="M11 222.0 H13" stroke="#555"/><path d="M9 226.7 H13" stroke="#555"/><path d="M11 231.4 H13" stroke="#555"/><path d="M11 236.1 H13" stroke="#555"/><path d="M11 240.9 H13" stroke="#555"/><path d="M8 245.6 H13" stroke="#777"/><text transform="translate(7.5,252.6) rotate(-90)" font-size="9.5" font-family="Liberation Sans" fill="#6a6a6a">2</text><path d="M11 250.3 H13" stroke="#555"/><path d="M11 255.0 H13" stroke="#555"/><path d="M11 259.8 H13" stroke="#555"/><path d="M9 264.5 H13" stroke="#555"/><path d="M11 269.2 H13" stroke="#555"/><path d="M11 273.9 H13" stroke="#555"/><path d="M11 278.7 H13" stroke="#555"/><path d="M8 283.4 H13" stroke="#777"/><text transform="translate(7.5,290.4) rotate(-90)" font-size="9.5" font-family="Liberation Sans" fill="#6a6a6a">3</text><path d="M11 288.1 H13" stroke="#555"/><path d="M11 292.8 H13" stroke="#555"/><path d="M11 297.6 H13" stroke="#555"/><path d="M9 302.3 H13" stroke="#555"/><path d="M11 307.0 H13" stroke="#555"/><path d="M11 311.7 H13" stroke="#555"/><path d="M11 316.5 H13" stroke="#555"/><path d="M8 321.2 H13" stroke="#777"/><text transform="translate(7.5,328.2) rotate(-90)" font-size="9.5" font-family="Liberation Sans" fill="#6a6a6a">4</text><path d="M11 325.9 H13" stroke="#555"/><path d="M11 330.6 H13" stroke="#555"/><path d="M11 335.4 H13" stroke="#555"/><path d="M9 340.1 H13" stroke="#555"/><path d="M11 344.8 H13" stroke="#555"/><path d="M11 349.5 H13" stroke="#555"/><path d="M11 354.3 H13" stroke="#555"/><path d="M8 359.0 H13" stroke="#777"/><text transform="translate(7.5,366.0) rotate(-90)" font-size="9.5" font-family="Liberation Sans" fill="#6a6a6a">5</text><path d="M11 363.7 H13" stroke="#555"/><path d="M11 368.4 H13" stroke="#555"/><path d="M11 373.1 H13" stroke="#555"/><path d="M9 377.9 H13" stroke="#555"/><path d="M11 382.6 H13" stroke="#555"/><path d="M11 387.3 H13" stroke="#555"/><path d="M11 392.0 H13" stroke="#555"/><path d="M8 396.8 H13" stroke="#777"/><text transform="translate(7.5,403.8) rotate(-90)" font-size="9.5" font-family="Liberation Sans" fill="#6a6a6a">6</text><path d="M11 401.5 H13" stroke="#555"/><path d="M11 406.2 H13" stroke="#555"/><path d="M11 410.9 H13" stroke="#555"/><path d="M9 415.7 H13" stroke="#555"/><path d="M11 420.4 H13" stroke="#555"/><path d="M11 425.1 H13" stroke="#555"/><path d="M11 429.8 H13" stroke="#555"/><path d="M8 434.6 H13" stroke="#777"/><text transform="translate(7.5,441.6) rotate(-90)" font-size="9.5" font-family="Liberation Sans" fill="#6a6a6a">7</text><path d="M11 439.3 H13" stroke="#555"/><path d="M11 444.0 H13" stroke="#555"/><path d="M11 448.7 H13" stroke="#555"/><path d="M9 453.5 H13" stroke="#555"/><path d="M11 458.2 H13" stroke="#555"/><path d="M11 462.9 H13" stroke="#555"/><path d="M11 467.6 H13" stroke="#555"/><path d="M8 472.4 H13" stroke="#777"/><text transform="translate(7.5,479.4) rotate(-90)" font-size="9.5" font-family="Liberation Sans" fill="#6a6a6a">8</text><path d="M11 477.1 H13" stroke="#555"/><path d="M11 481.8 H13" stroke="#555"/><path d="M11 486.5 H13" stroke="#555"/><path d="M9 491.3 H13" stroke="#555"/><path d="M11 496.0 H13" stroke="#555"/><path d="M11 500.7 H13" stroke="#555"/><path d="M11 505.4 H13" stroke="#555"/><path d="M8 510.2 H13" stroke="#777"/><text transform="translate(7.5,517.2) rotate(-90)" font-size="9.5" font-family="Liberation Sans" fill="#6a6a6a">9</text><path d="M11 514.9 H13" stroke="#555"/><path d="M11 519.6 H13" stroke="#555"/><path d="M11 524.3 H13" stroke="#555"/><path d="M9 529.1 H13" stroke="#555"/><path d="M11 533.8 H13" stroke="#555"/><path d="M11 538.5 H13" stroke="#555"/><path d="M11 543.2 H13" stroke="#555"/><path d="M8 548.0 H13" stroke="#777"/><text transform="translate(7.5,560.5) rotate(-90)" font-size="9.5" font-family="Liberation Sans" fill="#6a6a6a">10</text><path d="M11 552.7 H13" stroke="#555"/><path d="M11 557.4 H13" stroke="#555"/><path d="M11 562.1 H13" stroke="#555"/><path d="M9 566.8 H13" stroke="#555"/><path d="M11 571.6 H13" stroke="#555"/><path d="M11 576.3 H13" stroke="#555"/><path d="M11 581.0 H13" stroke="#555"/><path d="M8 585.7 H13" stroke="#777"/><text transform="translate(7.5,598.2) rotate(-90)" font-size="9.5" font-family="Liberation Sans" fill="#6a6a6a">11</text><path d="M11 590.5 H13" stroke="#555"/><path d="M11 595.2 H13" stroke="#555"/><path d="M11 599.9 H13" stroke="#555"/><path d="M9 604.6 H13" stroke="#555"/><path d="M11 609.4 H13" stroke="#555"/><path d="M11 614.1 H13" stroke="#555"/><path d="M11 618.8 H13" stroke="#555"/><path d="M8 623.5 H13" stroke="#777"/><text transform="translate(7.5,636.0) rotate(-90)" font-size="9.5" font-family="Liberation Sans" fill="#6a6a6a">12</text><path d="M11 628.3 H13" stroke="#555"/><path d="M11 633.0 H13" stroke="#555"/><path d="M11 637.7 H13" stroke="#555"/><path d="M9 642.4 H13" stroke="#555"/><path d="M11 647.2 H13" stroke="#555"/><path d="M11 651.9 H13" stroke="#555"/><rect x="1" y="428.5" width="13" height="2" fill="#8a8a8a"/><rect x="1" y="479.5" width="13" height="2" fill="#8a8a8a"/><rect x="1" y="529.5" width="13" height="2" fill="#8a8a8a"/><rect x="1" y="579.5" width="13" height="2" fill="#8a8a8a"/><rect x="1" y="608.5" width="13" height="2" fill="#8a8a8a"/></svg>
<svg style="position:absolute;left:222px;top:339px;" width="8" height="12" viewBox="0 0 8 12"><path d="M4 1 V10 M1 7 L4 10 L7 7 M0 10.5 H8" fill="none" stroke="#555" stroke-width="1.5"/></svg>
<div class="d" style="left:434px;top:349px;font-size:9.2px;line-height:12px">Sample Company · Sample street 1245 · 12345 Sample town</div>
<div class="d" style="left:434px;top:361px;">Mr. Paul Parker</div>
<div class="d" style="left:434px;top:375px;">Parklane 1</div>
<div class="d" style="left:434px;top:389px;">0123 Parkside</div>
<div class="d" style="left:434px;top:471px;font-weight:bold;font-size:13.2px;line-height:16px">Purchase order 51 PO51-202301/0001</div>
<div class="d" style="left:435px;top:502px;font-weight:bold;font-size:13px;line-height:16px">Subject:</div>
<div class="d" style="left:434px;top:559px;">please deliver:</div>
<div style="position:absolute;left:816px;top:367px;width:262px;height:171px;border:1px solid #c8c8c8"></div>
<div class="d" style="left:818px;top:367px;line-height:14px">Customer No.</div>
<div class="d" style="left:915px;top:367px;line-height:14px">10001</div>
<div style="position:absolute;left:817px;top:381px;width:259px;height:1px;background:#c0c0c0"></div>
<div class="d" style="left:818px;top:381px;line-height:14px">Project</div>
<div class="d" style="left:915px;top:381px;line-height:14px">Demo partial deliveries</div>
<div style="position:absolute;left:817px;top:394px;width:259px;height:1px;background:#c0c0c0"></div>
<div class="d" style="left:818px;top:394px;line-height:14px"></div>
<div class="d" style="left:915px;top:394px;line-height:14px"></div>
<div style="position:absolute;left:817px;top:408px;width:259px;height:1px;background:#c0c0c0"></div>
<div class="d" style="left:818px;top:408px;line-height:14px">Your contact</div>
<div class="d" style="left:915px;top:408px;line-height:14px">Anton Admin</div>
<div style="position:absolute;left:817px;top:422px;width:259px;height:1px;background:#c0c0c0"></div>
<div class="d" style="left:818px;top:422px;line-height:14px">EMail</div>
<div class="d" style="left:915px;top:422px;line-height:14px">noreply@ingenious.de</div>
<div style="position:absolute;left:817px;top:435px;width:259px;height:1px;background:#c0c0c0"></div>
<div class="d" style="left:818px;top:435px;line-height:14px">Phone</div>
<div class="d" style="left:915px;top:435px;line-height:14px">0123/456789</div>
<div style="position:absolute;left:817px;top:449px;width:259px;height:1px;background:#c0c0c0"></div>
<div class="d" style="left:818px;top:449px;line-height:14px">Fax</div>
<div class="d" style="left:915px;top:449px;line-height:14px">0123/456780</div>
<div style="position:absolute;left:817px;top:463px;width:259px;height:1px;background:#c0c0c0"></div>
<div class="d" style="left:818px;top:463px;line-height:14px"></div>
<div class="d" style="left:915px;top:463px;line-height:14px"></div>
<div style="position:absolute;left:817px;top:478px;width:259px;height:1px;background:#c0c0c0"></div>
<div class="d" style="left:818px;top:478px;line-height:14px">Date</div>
<div class="d" style="left:915px;top:478px;line-height:14px">1/17/2023</div>
<div style="position:absolute;left:912px;top:367px;width:1px;height:126px;background:#c0c0c0"></div>
<div style="position:absolute;left:816px;top:367px;width:260px;height:126px;border:1.5px solid #000"></div>
<div style="position:absolute;left:434px;top:587px;width:641px;height:1px;background:#c0c0c0"></div>
<div style="position:absolute;left:434px;top:587px;width:1px;height:203px;background:#c0c0c0"></div>
<div style="position:absolute;left:1074px;top:587px;width:1px;height:203px;background:#c0c0c0"></div>
<div style="position:absolute;left:434px;top:788px;width:641px;height:1px;background:#c0c0c0"></div>
<div style="position:absolute;left:434px;top:608px;width:641px;height:2px;background:#000"></div>
<div style="position:absolute;left:434px;top:660px;width:641px;height:1px;background:#c0c0c0"></div>
<div style="position:absolute;left:434px;top:710px;width:641px;height:1px;background:#c0c0c0"></div>
<div style="position:absolute;left:434px;top:760px;width:476px;height:1px;background:#c0c0c0"></div>
<div style="position:absolute;left:910px;top:760px;width:165px;height:2px;background:#111"></div>
<div style="position:absolute;left:509px;top:587px;width:1px;height:202px;background:#c0c0c0"></div>
<div style="position:absolute;left:814px;top:587px;width:1px;height:173px;background:#c0c0c0"></div>
<div style="position:absolute;left:910px;top:587px;width:1px;height:202px;background:#c0c0c0"></div>
<div style="position:absolute;left:987px;top:587px;width:1px;height:173px;background:#c0c0c0"></div>
<div class="d" style="left:439px;top:591px;font-weight:bold">PosNo.</div>
<div class="d" style="left:512px;top:591px;font-weight:bold">Description</div>
<div class="d" style="left:817px;top:591px;font-weight:bold">Quantity</div>
<div class="d" style="left:680px;top:591px;width:300px;text-align:right;font-weight:bold">SP $</div>
<div class="d" style="left:757px;top:591px;width:300px;text-align:right;font-weight:bold">GP $</div>
<div style="position:absolute;left:512px;top:618px;width:198px;height:13px;background:#c4c4c4"></div>
<div class="d" style="left:439px;top:617px;">001</div>
<div class="d" style="left:512px;top:617px;">Motor with remote control max. 16 kg</div>
<div class="d" style="left:817px;top:617px;">20.00 piece</div>
<div class="d" style="left:685px;top:617px;width:300px;text-align:right;">55.00</div>
<div class="d" style="left:774px;top:617px;width:300px;text-align:right;">1,100.00</div>
<div class="d" style="left:439px;top:667px;">002</div>
<div class="d" style="left:512px;top:667px;">Motor with remote control max. 28 kg</div>
<div class="d" style="left:817px;top:667px;">20.00 piece</div>
<div class="d" style="left:685px;top:667px;width:300px;text-align:right;">60.00</div>
<div class="d" style="left:774px;top:667px;width:300px;text-align:right;">1,200.00</div>
<div class="d" style="left:439px;top:717px;">003</div>
<div class="d" style="left:512px;top:717px;">Motor with remote control max. 55 kg</div>
<div class="d" style="left:817px;top:717px;">20.00 piece</div>
<div class="d" style="left:685px;top:717px;width:300px;text-align:right;">65.00</div>
<div class="d" style="left:774px;top:717px;width:300px;text-align:right;">1,300.00</div>
<div style="position:absolute;left:680px;top:618px;width:1px;height:13px;background:#000"></div>
<div class="d" style="left:607px;top:768px;width:300px;text-align:right;letter-spacing:0.6px">Total (net)</div>
<div class="d" style="left:772px;top:768px;width:300px;text-align:right;letter-spacing:0.5px">3,600.00</div>
<div style="position:absolute;left:1298px;top:154px;width:299px;height:681px;background:#fff"></div>
<div style="position:absolute;left:1298px;top:154px;width:299px;height:643px;background:#d9d9d9"></div>
<div class="t" style="left:1318px;top:156px;font-weight:bold;color:#222;font-size:11.5px">Miscellaneous</div>
<svg style="position:absolute;left:1581px;top:160px;" width="10" height="5" viewBox="0 0 10 5"><path d="M1 4.5 L5 1 L9 4.5" stroke="#888" stroke-width="1.2" fill="none"/></svg>
<div style="position:absolute;left:1314px;top:171px;width:283px;height:1px;background:#a8a8a8"></div>
<div style="position:absolute;left:1315px;top:172px;width:132px;height:18px;background:#efefef"></div>
<div style="position:absolute;left:1448px;top:172px;width:148px;height:18px;background:#fff"></div>
<div class="t" style="left:1332px;top:174px;color:#0000e8">Name</div>
<div class="t" style="left:1452px;top:174px;color:#8c8c8c">Purchase order 51</div>
<div style="position:absolute;left:1314px;top:190px;width:283px;height:1px;background:#a8a8a8"></div>
<div style="position:absolute;left:1315px;top:191px;width:132px;height:18px;background:#efefef"></div>
<div style="position:absolute;left:1448px;top:191px;width:148px;height:18px;background:#fff"></div>
<div class="t" style="left:1332px;top:193px;color:#0000e8">Number</div>
<div class="t" style="left:1452px;top:193px;color:#8c8c8c">PO51-202301/0001</div>
<div style="position:absolute;left:1314px;top:209px;width:283px;height:1px;background:#a8a8a8"></div>
<div style="position:absolute;left:1315px;top:210px;width:132px;height:18px;background:#efefef"></div>
<div style="position:absolute;left:1448px;top:210px;width:148px;height:18px;background:#fff"></div>
<div class="t" style="left:1332px;top:212px;color:#111">Project</div>
<div class="t" style="left:1452px;top:212px;color:#111">Demo partial deliveries</div>
<svg style="position:absolute;left:1584px;top:217px;" width="8" height="4" viewBox="0 0 8 4"><path d="M0 0 H8 L4 4 Z" fill="#222"/></svg>
<div style="position:absolute;left:1314px;top:228px;width:283px;height:1px;background:#a8a8a8"></div>
<div style="position:absolute;left:1315px;top:229px;width:132px;height:18px;background:#efefef"></div>
<div style="position:absolute;left:1448px;top:229px;width:148px;height:18px;background:#fff"></div>
<div class="t" style="left:1332px;top:231px;color:#111">Purchase order from</div>
<div class="t" style="left:1452px;top:231px;color:#111">1/17/2023</div>
<svg style="position:absolute;left:1584px;top:236px;" width="8" height="4" viewBox="0 0 8 4"><path d="M0 0 H8 L4 4 Z" fill="#222"/></svg>
<div style="position:absolute;left:1314px;top:247px;width:283px;height:1px;background:#a8a8a8"></div>
<div style="position:absolute;left:1315px;top:248px;width:132px;height:18px;background:#efefef"></div>
<div style="position:absolute;left:1448px;top:248px;width:148px;height:18px;background:#fff"></div>
<div class="t" style="left:1332px;top:250px;color:#111">Preferred delivery date</div>
<svg style="position:absolute;left:1584px;top:255px;" width="8" height="4" viewBox="0 0 8 4"><path d="M0 0 H8 L4 4 Z" fill="#222"/></svg>
<div style="position:absolute;left:1314px;top:266px;width:283px;height:1px;background:#a8a8a8"></div>
<div style="position:absolute;left:1315px;top:267px;width:132px;height:18px;background:#efefef"></div>
<div style="position:absolute;left:1448px;top:267px;width:148px;height:18px;background:#fff"></div>
<div class="t" style="left:1332px;top:269px;color:#111">Confirmed delivery d...</div>
<svg style="position:absolute;left:1584px;top:274px;" width="8" height="4" viewBox="0 0 8 4"><path d="M0 0 H8 L4 4 Z" fill="#222"/></svg>
<div style="position:absolute;left:1314px;top:285px;width:283px;height:1px;background:#a8a8a8"></div>
<div style="position:absolute;left:1315px;top:286px;width:132px;height:18px;background:#efefef"></div>
<div style="position:absolute;left:1448px;top:286px;width:148px;height:18px;background:#fff"></div>
<div class="t" style="left:1332px;top:288px;color:#0000e8">Contact</div>
<div class="t" style="left:1452px;top:288px;color:#8c8c8c">Parker, Paul</div>
<svg style="position:absolute;left:1581px;top:294px;" width="11" height="3" viewBox="0 0 11 3"><rect x="0" y="0" width="2" height="2" fill="#222"/><rect x="4" y="0" width="2" height="2" fill="#222"/><rect x="8" y="0" width="2" height="2" fill="#222"/></svg>
<div style="position:absolute;left:1314px;top:304px;width:283px;height:1px;background:#a8a8a8"></div>
<div style="position:absolute;left:1315px;top:305px;width:132px;height:18px;background:#efefef"></div>
<div style="position:absolute;left:1448px;top:305px;width:148px;height:18px;background:#fff"></div>
<div class="t" style="left:1332px;top:307px;color:#0000e8">Project template</div>
<div class="t" style="left:1452px;top:307px;color:#8c8c8c">Purchase order</div>
<svg style="position:absolute;left:1584px;top:312px;" width="8" height="4" viewBox="0 0 8 4"><path d="M0 0 H8 L4 4 Z" fill="#222"/></svg>
<div style="position:absolute;left:1314px;top:323px;width:283px;height:1px;background:#a8a8a8"></div>
<div style="position:absolute;left:1315px;top:324px;width:132px;height:18px;background:#efefef"></div>
<div style="position:absolute;left:1448px;top:324px;width:148px;height:18px;background:#fff"></div>
<div class="t" style="left:1332px;top:326px;color:#111">Contact person</div>
<div class="t" style="left:1452px;top:326px;color:#111">Anton Admin</div>
<svg style="position:absolute;left:1584px;top:331px;" width="8" height="4" viewBox="0 0 8 4"><path d="M0 0 H8 L4 4 Z" fill="#222"/></svg>
<div style="position:absolute;left:1314px;top:342px;width:283px;height:1px;background:#a8a8a8"></div>
<div style="position:absolute;left:1315px;top:343px;width:132px;height:18px;background:#efefef"></div>
<div style="position:absolute;left:1448px;top:343px;width:148px;height:18px;background:#fff"></div>
<div class="t" style="left:1332px;top:345px;color:#111">Method of payment</div>
<svg style="position:absolute;left:1584px;top:350px;" width="8" height="4" viewBox="0 0 8 4"><path d="M0 0 H8 L4 4 Z" fill="#222"/></svg>
<div style="position:absolute;left:1314px;top:361px;width:283px;height:1px;background:#a8a8a8"></div>
<div style="position:absolute;left:1315px;top:362px;width:132px;height:18px;background:#efefef"></div>
<div style="position:absolute;left:1448px;top:362px;width:148px;height:18px;background:#fff"></div>
<div class="t" style="left:1332px;top:364px;color:#111">terms of delivery</div>
<svg style="position:absolute;left:1584px;top:369px;" width="8" height="4" viewBox="0 0 8 4"><path d="M0 0 H8 L4 4 Z" fill="#222"/></svg>
<div style="position:absolute;left:1314px;top:380px;width:283px;height:1px;background:#a8a8a8"></div>
<div style="position:absolute;left:1315px;top:381px;width:132px;height:18px;background:#efefef"></div>
<div style="position:absolute;left:1448px;top:381px;width:148px;height:18px;background:#fff"></div>
<div class="t" style="left:1332px;top:383px;color:#111">Delivery status</div>
<div class="t" style="left:1452px;top:383px;color:#111">Partial delivery</div>
<svg style="position:absolute;left:1584px;top:388px;" width="8" height="4" viewBox="0 0 8 4"><path d="M0 0 H8 L4 4 Z" fill="#222"/></svg>
<div style="position:absolute;left:1314px;top:399px;width:283px;height:1px;background:#a8a8a8"></div>
<div style="position:absolute;left:1315px;top:400px;width:132px;height:18px;background:#efefef"></div>
<div style="position:absolute;left:1448px;top:400px;width:148px;height:18px;background:#fff"></div>
<div class="t" style="left:1332px;top:402px;color:#111">Project text</div>
<svg style="position:absolute;left:1584px;top:407px;" width="8" height="4" viewBox="0 0 8 4"><path d="M0 0 H8 L4 4 Z" fill="#222"/></svg>
<div style="position:absolute;left:1314px;top:418px;width:283px;height:1px;background:#a8a8a8"></div>
<div style="position:absolute;left:1315px;top:419px;width:132px;height:18px;background:#efefef"></div>
<div style="position:absolute;left:1448px;top:419px;width:148px;height:18px;background:#fff"></div>
<div class="t" style="left:1332px;top:421px;color:#111">Notes</div>
<svg style="position:absolute;left:1584px;top:426px;" width="8" height="4" viewBox="0 0 8 4"><path d="M0 0 H8 L4 4 Z" fill="#222"/></svg>
<div style="position:absolute;left:1298px;top:437px;width:299px;height:1px;background:#a8a8a8"></div>
<div style="position:absolute;left:1314px;top:171px;width:1px;height:266px;background:#a8a8a8"></div>
<div style="position:absolute;left:1447px;top:171px;width:1px;height:266px;background:#a8a8a8"></div>
<div class="t" style="left:1318px;top:440px;font-weight:bold;color:#222;font-size:11.5px">Item</div>
<svg style="position:absolute;left:1581px;top:444px;" width="10" height="5" viewBox="0 0 10 5"><path d="M1 4.5 L5 1 L9 4.5" stroke="#888" stroke-width="1.2" fill="none"/></svg>
<div style="position:absolute;left:1314px;top:454px;width:283px;height:1px;background:#a8a8a8"></div>
<div style="position:absolute;left:1315px;top:455px;width:132px;height:18px;background:#efefef"></div>
<div style="position:absolute;left:1448px;top:455px;width:148px;height:18px;background:#fff"></div>
<div class="t" style="left:1332px;top:457px;color:#8c8c8c">Item type</div>
<div class="t" style="left:1452px;top:457px;color:#8c8c8c">Items</div>
<div style="position:absolute;left:1314px;top:473px;width:283px;height:1px;background:#a8a8a8"></div>
<div style="position:absolute;left:1315px;top:474px;width:132px;height:18px;background:#efefef"></div>
<div style="position:absolute;left:1448px;top:474px;width:148px;height:18px;background:#fff"></div>
<div class="t" style="left:1332px;top:476px;color:#111">auto. number</div>
<svg style="position:absolute;left:1517px;top:476px;" width="14" height="14" viewBox="0 0 14 14"><rect x="0.5" y="1.5" width="12" height="12" fill="#fff" stroke="#555"/><path d="M3 7 L6 11 L13 0" fill="none" stroke="#222" stroke-width="1.6"/></svg>
<div style="position:absolute;left:1314px;top:492px;width:283px;height:1px;background:#a8a8a8"></div>
<div style="position:absolute;left:1315px;top:493px;width:132px;height:18px;background:#efefef"></div>
<div style="position:absolute;left:1448px;top:493px;width:148px;height:18px;background:#fff"></div>
<div class="t" style="left:1332px;top:495px;color:#111">Item no.</div>
<div class="t" style="left:1452px;top:495px;color:#8c8c8c">001</div>
<div style="position:absolute;left:1314px;top:511px;width:283px;height:1px;background:#a8a8a8"></div>
<div style="position:absolute;left:1315px;top:512px;width:132px;height:18px;background:#efefef"></div>
<div style="position:absolute;left:1448px;top:512px;width:148px;height:18px;background:#fff"></div>
<div class="t" style="left:1332px;top:514px;color:#8c8c8c">Matchcode</div>
<div class="t" style="left:1452px;top:514px;color:#8c8c8c">Motor with remote contr...</div>
<svg style="position:absolute;left:1581px;top:520px;" width="11" height="3" viewBox="0 0 11 3"><rect x="0" y="0" width="2" height="2" fill="#222"/><rect x="4" y="0" width="2" height="2" fill="#222"/><rect x="8" y="0" width="2" height="2" fill="#222"/></svg>
<div style="position:absolute;left:1314px;top:530px;width:283px;height:1px;background:#a8a8a8"></div>
<div style="position:absolute;left:1315px;top:531px;width:132px;height:18px;background:#efefef"></div>
<div style="position:absolute;left:1448px;top:531px;width:148px;height:18px;background:#fff"></div>
<div class="t" style="left:1332px;top:533px;color:#8c8c8c">P. order number</div>
<div style="position:absolute;left:1314px;top:549px;width:283px;height:1px;background:#a8a8a8"></div>
<div style="position:absolute;left:1315px;top:550px;width:132px;height:18px;background:#efefef"></div>
<div style="position:absolute;left:1448px;top:550px;width:148px;height:18px;background:#fff"></div>
<div class="t" style="left:1332px;top:552px;color:#111">Quantity</div>
<div class="t" style="left:1192px;top:552px;width:400px;text-align:right;color:#111">20</div>
<div style="position:absolute;left:1314px;top:568px;width:283px;height:1px;background:#a8a8a8"></div>
<div style="position:absolute;left:1315px;top:569px;width:132px;height:18px;background:#efefef"></div>
<div style="position:absolute;left:1448px;top:569px;width:148px;height:18px;background:#fff"></div>
<div class="t" style="left:1332px;top:571px;color:#8c8c8c">Weight</div>
<div class="t" style="left:1192px;top:571px;width:400px;text-align:right;color:#8c8c8c">0.00</div>
<div style="position:absolute;left:1314px;top:587px;width:283px;height:1px;background:#a8a8a8"></div>
<div style="position:absolute;left:1315px;top:588px;width:132px;height:18px;background:#efefef"></div>
<div style="position:absolute;left:1448px;top:588px;width:148px;height:18px;background:#fff"></div>
<div class="t" style="left:1332px;top:590px;color:#111">Flat price</div>
<div class="t" style="left:1192px;top:590px;width:400px;text-align:right;color:#111">$55.00</div>
<div style="position:absolute;left:1314px;top:606px;width:283px;height:1px;background:#a8a8a8"></div>
<div style="position:absolute;left:1315px;top:607px;width:132px;height:18px;background:#efefef"></div>
<div style="position:absolute;left:1448px;top:607px;width:148px;height:18px;background:#fff"></div>
<div class="t" style="left:1332px;top:609px;color:#111">Unit price</div>
<div class="t" style="left:1192px;top:609px;width:400px;text-align:right;color:#111">$55.00</div>
<div style="position:absolute;left:1314px;top:625px;width:283px;height:1px;background:#a8a8a8"></div>
<div style="position:absolute;left:1315px;top:626px;width:132px;height:18px;background:#efefef"></div>
<div style="position:absolute;left:1448px;top:626px;width:148px;height:18px;background:#fff"></div>
<div class="t" style="left:1332px;top:628px;color:#111">Net price</div>
<div class="t" style="left:1192px;top:628px;width:400px;text-align:right;color:#111">$1,100.00</div>
<div style="position:absolute;left:1314px;top:644px;width:283px;height:1px;background:#a8a8a8"></div>
<div style="position:absolute;left:1315px;top:645px;width:132px;height:18px;background:#efefef"></div>
<div style="position:absolute;left:1448px;top:645px;width:148px;height:18px;background:#fff"></div>
<div class="t" style="left:1332px;top:647px;color:#8c8c8c">Stock receipt</div>
<div class="t" style="left:1192px;top:647px;width:400px;text-align:right;color:#8c8c8c">15</div>
<div style="position:absolute;left:1314px;top:663px;width:283px;height:1px;background:#a8a8a8"></div>
<div style="position:absolute;left:1315px;top:664px;width:132px;height:18px;background:#efefef"></div>
<div style="position:absolute;left:1448px;top:664px;width:148px;height:18px;background:#fff"></div>
<div class="t" style="left:1332px;top:666px;color:#8c8c8c">Stock is</div>
<div class="t" style="left:1192px;top:666px;width:400px;text-align:right;color:#8c8c8c">12.00</div>
<div style="position:absolute;left:1314px;top:682px;width:283px;height:1px;background:#a8a8a8"></div>
<div style="position:absolute;left:1315px;top:683px;width:132px;height:18px;background:#efefef"></div>
<div style="position:absolute;left:1448px;top:683px;width:148px;height:18px;background:#fff"></div>
<div class="t" style="left:1332px;top:685px;color:#8c8c8c">Stock Min</div>
<div class="t" style="left:1192px;top:685px;width:400px;text-align:right;color:#8c8c8c">0.00</div>
<div style="position:absolute;left:1314px;top:701px;width:283px;height:1px;background:#a8a8a8"></div>
<div style="position:absolute;left:1315px;top:702px;width:132px;height:18px;background:#efefef"></div>
<div style="position:absolute;left:1448px;top:702px;width:148px;height:18px;background:#fff"></div>
<div class="t" style="left:1332px;top:704px;color:#8c8c8c">Ordered</div>
<div class="t" style="left:1192px;top:704px;width:400px;text-align:right;color:#8c8c8c">9.00</div>
<div style="position:absolute;left:1314px;top:720px;width:283px;height:1px;background:#a8a8a8"></div>
<div style="position:absolute;left:1315px;top:721px;width:132px;height:18px;background:#efefef"></div>
<div style="position:absolute;left:1448px;top:721px;width:148px;height:18px;background:#fff"></div>
<div class="t" style="left:1332px;top:723px;color:#8c8c8c">Reserved</div>
<div class="t" style="left:1192px;top:723px;width:400px;text-align:right;color:#8c8c8c">0.00</div>
<div style="position:absolute;left:1314px;top:739px;width:283px;height:1px;background:#a8a8a8"></div>
<div style="position:absolute;left:1315px;top:740px;width:132px;height:18px;background:#efefef"></div>
<div style="position:absolute;left:1448px;top:740px;width:148px;height:18px;background:#fff"></div>
<div class="t" style="left:1332px;top:742px;color:#8c8c8c">Order proposal</div>
<div class="t" style="left:1192px;top:742px;width:400px;text-align:right;color:#8c8c8c">0.00</div>
<div style="position:absolute;left:1314px;top:758px;width:283px;height:1px;background:#a8a8a8"></div>
<div style="position:absolute;left:1315px;top:759px;width:132px;height:18px;background:#efefef"></div>
<div style="position:absolute;left:1448px;top:759px;width:148px;height:18px;background:#fff"></div>
<div class="t" style="left:1332px;top:761px;color:#8c8c8c">delivery time</div>
<div class="t" style="left:1192px;top:761px;width:400px;text-align:right;color:#8c8c8c">0</div>
<div style="position:absolute;left:1314px;top:777px;width:283px;height:1px;background:#a8a8a8"></div>
<div style="position:absolute;left:1315px;top:778px;width:132px;height:18px;background:#efefef"></div>
<div style="position:absolute;left:1448px;top:778px;width:148px;height:18px;background:#fff"></div>
<div class="t" style="left:1332px;top:780px;color:#8c8c8c">Available</div>
<div class="t" style="left:1192px;top:780px;width:400px;text-align:right;color:#8c8c8c">12.00</div>
<div style="position:absolute;left:1314px;top:796px;width:283px;height:1px;background:#e0e0e0"></div>
<div style="position:absolute;left:1314px;top:454px;width:1px;height:342px;background:#a8a8a8"></div>
<div style="position:absolute;left:1447px;top:454px;width:1px;height:342px;background:#a8a8a8"></div>
</body></html>
